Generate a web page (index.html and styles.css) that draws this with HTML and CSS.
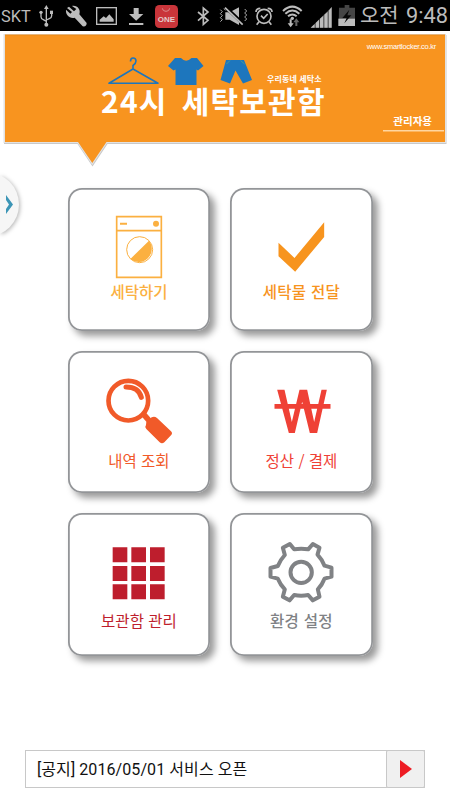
FILE: index.html
```html
<!DOCTYPE html>
<html lang="ko">
<head>
<meta charset="utf-8">
<title>24시 세탁보관함</title>
<link rel="stylesheet" href="styles.css">
</head>
<body>
<div class="status">
  <svg viewBox="0 0 1350 93" width="450" height="31">
    <g fill="#bcbcbc">
      <text class="st" x="3" y="66" font-size="47" textLength="89" lengthAdjust="spacingAndGlyphs">SKT</text>
      <g fill="none" stroke="#bcbcbc" stroke-width="4">
        <path d="M139 24V72M123 39V50Q123 56 130 59L139 64M155 39V47Q155 53 148 56L139 60"/>
      </g>
      <path d="M139 15l7 12h-14z"/><circle cx="139" cy="74" r="6"/><circle cx="123" cy="37" r="5"/><path d="M150 32h9v10h-9z"/>
      <path d="M207 20L222 34L229 27L216 18C232 15 243 29 238 43L260 69Q260 81 248 79L224 53C209 57 196 44 198 29L211 41L216 36L201 24Z"/>
      <rect x="290" y="23" width="59" height="50" fill="none" stroke="#bcbcbc" stroke-width="4"/>
      <path d="M299 65V59L311 49L318 54L328 43L341 58V65Z"/>
      <path d="M401 24h15v18h14L408.500 62L387 42h14zM387 69h43v6h-43z"/>
      <rect x="465" y="15" width="69" height="69" rx="13" fill="#c9353a"/>
      <path d="M487 25Q488 34 498 34Q508 34 509 25" fill="none" stroke="#d98a8a" stroke-width="3"/>
      <text class="one" x="473" y="66" font-size="23" textLength="52" lengthAdjust="spacingAndGlyphs" fill="#e3caca">ONE</text>
      <path d="M594 36L624 61L610 73V24L624 36L594 62" fill="none" stroke="#bcbcbc" stroke-width="5"/>
      <g fill="none" stroke="#aaa" stroke-width="3">
        <path d="M661 29l6 6-6 6 6 6-6 6 6 6-6 6M672 25l4 6"/>
        <path d="M734 27l6 6-6 6 6 6-6 6 6 6-6 6"/>
      </g>
      <path d="M676 37h13l28-15v53l-28-16h-13z"/>
      <path d="M677 22L730 72" stroke="#000" stroke-width="10"/><path d="M675 23L728 74" stroke="#bcbcbc" stroke-width="5"/>
      <g fill="none" stroke="#bcbcbc" stroke-width="5">
        <circle cx="792" cy="49" r="21"/><path d="M783 47l8 8 12-13M768 36Q768 25 781 25M816 36Q816 25 803 25M777 65l-7 9M807 65l7 9"/>
        <path d="M849 33Q877 7 905 33M856 41Q877 22 898 41M864 49Q877 38 890 49" stroke-width="6"/>
      </g>
      <circle cx="877" cy="55" r="5"/>
      <path d="M863 82l-9-12h6V58h6v12h6z" transform="translate(9 0)"/><path d="M892 78h-6V67h-6l9-12 9 12h-6z" fill="#666"/>
      <path d="M932 83L944 72V83zM947 83V69L957 59V83zM960 83V56L970 47V83zM973 83V44L983 35V83zM986 83V32L995 21V83z"/>
      <path d="M932 83L995 21V83z" fill-opacity=".35"/>
      <path d="M1017 23h17v-8h14v8h17v55h-49z" fill="#454545"/><path d="M1015 56h50v22h-50z"/>
      <path d="M1048 29L1027 54H1040L1033 70L1054 46H1042Z" fill="#080808"/>
      <text class="st" x="1080" y="69" font-size="62" textLength="116" lengthAdjust="spacingAndGlyphs">오전</text>
      <text class="st" x="1218" y="70" font-size="64" textLength="126" lengthAdjust="spacingAndGlyphs">9:48</text>
    </g>
  </svg>
</div>
<header class="banner">
  <svg class="banner-art" viewBox="0 31 450 140" width="450" height="140">
    <path d="M4 35H446.500V144H107.500L92.500 166.500L77.500 144H4Z" fill="#c9c9c9"/>
    <path d="M3.500 34H446V143H107L92.300 165L77.500 143H3.500Z" fill="#e2e2e2"/>
    <path d="M5 35H445V142H106.500L92.300 163L78 142H5Z" fill="#f8941f"/>
    <path d="M5 35H445" stroke="#e98a18" stroke-width="1"/>
    <path d="M130.500 61.500Q130.500 58 133 58Q136 58 136 61Q136 63.500 133 65.500V69L109 83.300H158L133 69" fill="none" stroke="#1d76bd" stroke-width="1.600" stroke-linejoin="round"/>
    <path d="M175 58H181Q186 63.500 191.500 58H197L203.500 66L198 70.500L196.500 69.500V85H175.500V69.500L173.500 70.500L168 66Z" fill="#1d76bd"/>
    <path d="M226 60H244L252 80L243 83.500L235.500 70.500L230 83.500L220.500 80Z" fill="#1d76bd"/>
    <path d="M226.500 64L230 60.500M240.500 60.500L244.500 64" stroke="#55a584" stroke-width=".8"/>
    <path d="M383 130.700H444" stroke="#ffd6a0" stroke-width="1.600"/>
  </svg>
  <div class="url">www.smartlocker.co.kr</div>
  <div class="tagline">우리동네 세탁소</div>
  <h1 class="title">24시 세탁보관함</h1>
  <div class="role">관리자용</div>
</header>
<svg class="drawer" viewBox="0 165 30 80" width="30" height="80">
  <circle cx="-13" cy="204.500" r="32" fill="#f6f6f6"/>
  <path d="M6 195L9.300 199.500L13 204.500L9.300 209.500L6 214V209L9 204.500L6 200Z" fill="#3c95b6"/>
</svg>
<main class="menu">
  <a class="card wash">
    <svg viewBox="24 25 427.500 276"><g fill="none" stroke="#fbb040" stroke-width="5"><path d="M170 111H304V293H170ZM170 153H304"/><circle cx="239" cy="210" r="39" stroke-width="3"/></g><path d="M180 129h21v6h-21zM267 183A39.500 39.500 0 0 1 211 238Z" fill="#fbb040"/><circle cx="288" cy="132.500" r="9" fill="#fbb040"/></svg>
    <span class="label">세탁하기</span>
  </a>
  <a class="card deliver">
    <svg viewBox="25.500 25 427.500 276"><path d="M171 189L219 235L308 128V172L221 276L171 230Z" fill="#f7941e"/></svg>
    <span class="label">세탁물 전달</span>
  </a>
  <a class="card search">
    <svg viewBox="24 25 427.500 276"><g fill="none" stroke="#f15a29"><circle cx="205" cy="174" r="59.500" stroke-width="14"/><path d="M198 133Q236 133 244 164" stroke-width="15" stroke-linecap="round"/><path d="M249 213L270 237" stroke-width="17"/></g><path d="M291 226L333 266Q339 272 333 278L313 299Q306 305 299 299L259 259Q253 253 258 247L259 238L275 224Q283 219 291 226Z" fill="#f15a29"/></svg>
    <span class="label">내역 조회</span>
  </a>
  <a class="card pay">
    <svg viewBox="25.500 25 427.500 276"><path d="M167 141H189L211 238L234 141H257L278 238L300 141H316L287 271H265L242 177L220 271H202ZM159 184H327V198H159Z" fill="#ef4136"/></svg>
    <span class="label">정산 / 결제</span>
  </a>
  <a class="card lockers">
    <svg viewBox="24 22 427.500 276"><path d="M158 125h44v45h-44zM214 125h44v45h-44zM270 125h44v45h-44zM158 181h44v45h-44zM214 181h44v45h-44zM270 181h44v45h-44zM158 236h44v45h-44zM214 236h44v45h-44zM270 236h44v45h-44z" fill="#be1e2d"/></svg>
    <span class="label">보관함 관리</span>
  </a>
  <a class="card settings">
    <svg viewBox="25.500 22 427.500 276"><g fill="none" stroke="#808285" stroke-width="12" stroke-linejoin="round"><circle cx="239" cy="200" r="32"/><path d="M205 115L218 131Q239 127 260 131L274 115L294 126L288 147Q302 162 309 180L330 186V213L309 219Q302 237 289 251L294 273L274 284L260 268Q239 272 218 268L204 284L184 273L190 251Q177 238 169 219L147 213V187L169 181Q176 163 190 148L184 126Z"/></g></svg>
    <span class="label">환경 설정</span>
  </a>
</main>
<footer class="notice">
  <span class="notice-text">[공지] 2016/05/01 서비스 오픈</span>
  <button class="next"><svg viewBox="0 0 12 18" width="12" height="18"><path d="M0 0L12 9L0 18Z" fill="#ed1c24"/></svg></button>
</footer>
</body>
</html>
```
FILE: styles.css
```css
* { box-sizing: border-box; }
body {
  margin: 0;
  width: 450px;
  height: 800px;
  overflow: hidden;
  position: relative;
  background: #fff;
  font-family: Roboto, "Noto Sans CJK KR", sans-serif;
}
svg { display: block; }
.status { height: 31px; background: #000; }
.st { font-family: Roboto, "Noto Sans CJK KR", sans-serif; }
.one { font-family: "Liberation Sans", sans-serif; font-weight: 700; }
.banner {
  position: relative;
  height: 140px;
  color: #fff;
  display: flow-root;
}
.banner-art { position: absolute; left: 0; top: 0; z-index: -1; }
.url {
  margin: 11px 14px 0 0;
  height: 10px;
  line-height: 10px;
  font-family: "Liberation Sans", sans-serif;
  font-size: 7.5px;
  letter-spacing: -0.25px;
  text-align: right;
}
.tagline {
  margin: 23px 0 0 267px;
  height: 10px;
  line-height: 10px;
  font-size: 8px;
  font-weight: 700;
  letter-spacing: 0.15px;
}
.title {
  margin: -1px 0 0 101px;
  height: 32px;
  line-height: 32px;
  font-family: "Noto Sans CJK KR", sans-serif;
  font-size: 30px;
  font-weight: 700;
  letter-spacing: 1.2px;
  word-spacing: 4.5px;
  white-space: nowrap;
}
.role {
  margin: 0 18px 0 0;
  height: 12px;
  line-height: 12px;
  font-size: 10.5px;
  font-weight: 700;
  text-align: right;
}
.drawer {
  position: absolute;
  left: 0;
  top: 165px;
  filter: drop-shadow(1px 1px 2px rgba(0, 0, 0, .3));
}
.menu {
  display: grid;
  grid-template-columns: 142.5px 142.5px;
  grid-auto-rows: 142.5px;
  gap: 20px;
  padding: 17px 0 0 67.7px;
}
.card {
  border-radius: 14px;
  background: #fff;
  box-shadow: inset 0 0 0 1.8px #939598, 5px 5px 7px rgba(0, 0, 0, .4);
}
.card svg { width: 142.5px; height: 92px; overflow: visible; }
.label {
  display: block;
  height: 24px;
  margin-top: -1px;
  line-height: 24px;
  font-family: "Noto Sans CJK KR", sans-serif;
  font-size: 15.5px;
  text-align: center;
  white-space: nowrap;
}
.wash { color: #fbb040; }
.deliver { color: #f7941e; }
.wash .label, .deliver .label { font-weight: 500; }
.deliver .label { letter-spacing: 0.3px; }
.search { color: #f15a29; }
.pay { color: #ef4136; }
.search .label, .pay .label { margin-top: 5px; }
.lockers { color: #be1e2d; }
.settings { color: #808285; }
.lockers .label, .settings .label { margin-top: 3px; }
.settings .label { letter-spacing: 0.3px; font-weight: 500; }
.notice {
  display: flex;
  align-items: stretch;
  justify-content: space-between;
  width: 400px;
  height: 38px;
  margin: 94px 0 0 25px;
  border: 1px solid #c8c8c8;
}
.notice-text {
  padding-left: 11px;
  line-height: 37px;
  font-size: 16px;
  letter-spacing: 0.08px;
  color: #111;
}
.next {
  display: flex;
  align-items: center;
  justify-content: center;
  width: 39px;
  padding: 0;
  margin: -1px -1px -1px 0;
  border: 1px solid #c8c8c8;
  border-radius: 2px;
  background: #f0f0f0;
}
```
